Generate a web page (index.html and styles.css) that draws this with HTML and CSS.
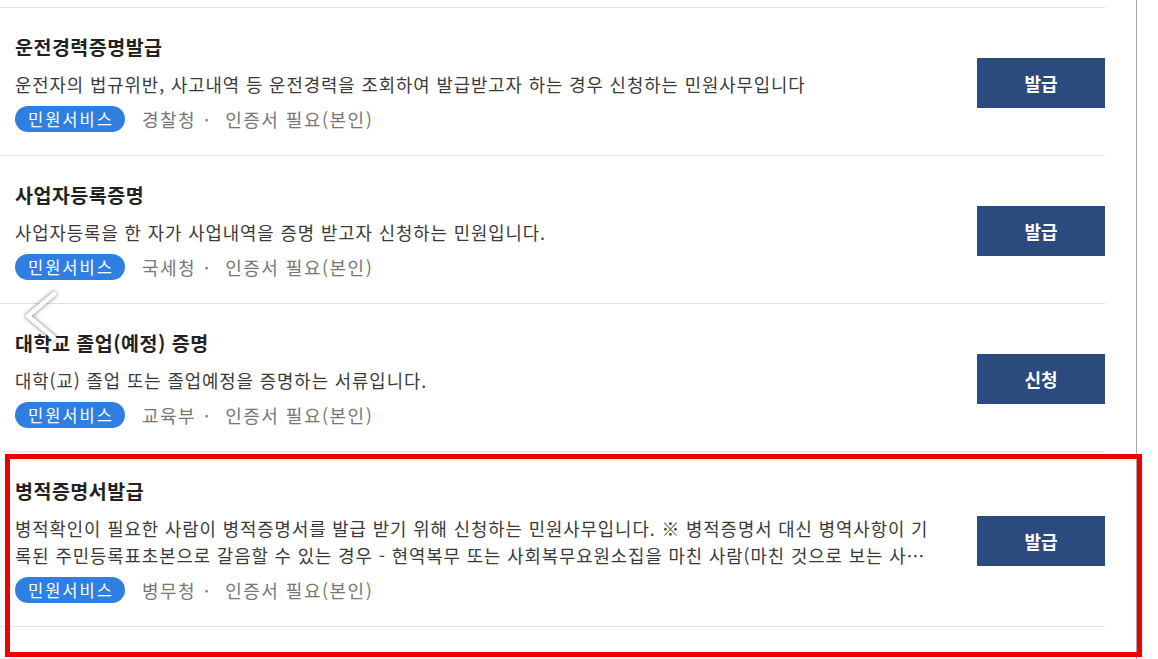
FILE: index.html
```html
<!DOCTYPE html>
<html lang="ko">
<head>
<meta charset="utf-8">
<title>민원서비스 목록</title>
<link rel="stylesheet" href="styles.css">
</head>
<body>
<div class="frame">
  <ul class="list">
    <li class="item">
      <div class="content">
        <h3 class="title">운전경력증명발급</h3>
        <p class="desc">운전자의 법규위반, 사고내역 등 운전경력을 조회하여 발급받고자 하는 경우 신청하는 민원사무입니다</p>
        <div class="meta"><span class="tag">민원서비스</span><span class="org">경찰청</span><span class="dot">·</span><span class="cert">인증서 필요(본인)</span></div>
      </div>
      <button class="btn">발급</button>
    </li>
    <li class="item">
      <div class="content">
        <h3 class="title">사업자등록증명</h3>
        <p class="desc">사업자등록을 한 자가 사업내역을 증명 받고자 신청하는 민원입니다.</p>
        <div class="meta"><span class="tag">민원서비스</span><span class="org">국세청</span><span class="dot">·</span><span class="cert">인증서 필요(본인)</span></div>
      </div>
      <button class="btn">발급</button>
    </li>
    <li class="item">
      <div class="content">
        <h3 class="title">대학교 졸업(예정) 증명</h3>
        <p class="desc">대학(교) 졸업 또는 졸업예정을 증명하는 서류입니다.</p>
        <div class="meta"><span class="tag">민원서비스</span><span class="org">교육부</span><span class="dot">·</span><span class="cert">인증서 필요(본인)</span></div>
      </div>
      <button class="btn">신청</button>
    </li>
    <li class="item">
      <div class="content">
        <h3 class="title">병적증명서발급</h3>
        <p class="desc">병적확인이 필요한 사람이 병적증명서를 발급 받기 위해 신청하는 민원사무입니다. ※ 병적증명서 대신 병역사항이 기록된 주민등록표초본으로 갈음할 수 있는 경우 - 현역복무 또는 사회복무요원소집을 마친 사람(마친 것으로 보는 사람을 포함한다)</p>
        <div class="meta"><span class="tag">민원서비스</span><span class="org">병무청</span><span class="dot">·</span><span class="cert">인증서 필요(본인)</span></div>
      </div>
      <button class="btn">발급</button>
    </li>
  </ul>
  <svg class="prev" width="44" height="56" viewBox="0 0 44 56" aria-hidden="true">
    <polyline points="34,6 8,28 34,50" fill="none" stroke="#ffffff" stroke-width="4.5" stroke-linecap="round" stroke-linejoin="round"/>
  </svg>
  <div class="highlight"></div>
</div>
</body>
</html>
```

FILE: styles.css
```css
* { box-sizing: border-box; }
html, body { margin: 0; padding: 0; background: #ffffff; }
body {
  font-family: "Noto Sans CJK KR", "Noto Sans", sans-serif;
  color: #333333;
}
.frame {
  position: relative;
  width: 1137px;
  min-height: 659px;
  border-right: 1px solid #a8a8a8;
  padding-top: 7px;
}
.list {
  list-style: none;
  margin: 0;
  padding: 0;
  width: 1105px;
  border-top: 1px solid #e2e2e2;
}
.item {
  display: flex;
  align-items: center;
  gap: 44px;
  padding: 26px 0 23px 15px;
  border-bottom: 1px solid #e2e2e2;
}
.content {
  flex: 1;
  min-width: 0;
}
.title {
  margin: 0;
  font-size: 19.5px;
  line-height: 26px;
  font-weight: 700;
  letter-spacing: 0.5px;
  color: #222222;
}
.desc {
  margin: 11px 0 0;
  font-size: 17.8px;
  line-height: 27px;
  letter-spacing: 0.92px;
  color: #3a3a3a;
  display: -webkit-box;
  -webkit-box-orient: vertical;
  -webkit-line-clamp: 2;
  overflow: hidden;
}
.meta {
  margin-top: 8px;
  display: flex;
  align-items: center;
  height: 26px;
  font-size: 18px;
  color: #777777;
}
.org, .cert { letter-spacing: 1.5px; }
.tag {
  display: inline-flex;
  align-items: center;
  height: 26px;
  padding: 0 11px 0 13px;
  border-radius: 13px;
  background: #2f7fe2;
  color: #ffffff;
  font-size: 16.5px;
  letter-spacing: 2px;
  margin-right: 17px;
}
.dot { margin: 0 16px 0 8px; }
.btn {
  flex: none;
  width: 128px;
  height: 50px;
  border: 0;
  background: #2b4a7d;
  color: #ffffff;
  font-family: inherit;
  font-size: 18px;
  font-weight: 700;
}
.prev {
  position: absolute;
  left: 20px;
  top: 288px;
  filter: drop-shadow(0 0 2px rgba(0,0,0,0.55));
}
.highlight {
  position: absolute;
  left: 5px;
  top: 454px;
  width: 1137px;
  height: 203px;
  border: 5px solid #ee0000;
  pointer-events: none;
}
```
